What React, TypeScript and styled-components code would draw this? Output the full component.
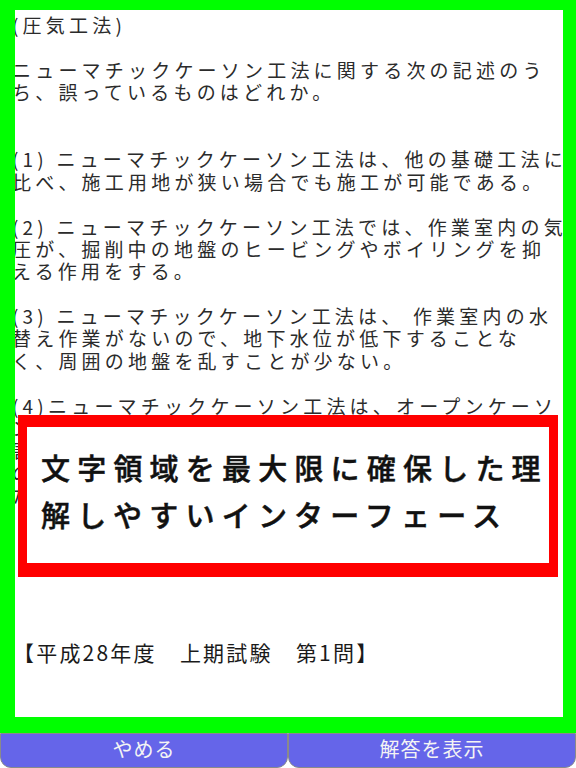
import React from 'react';
import styled, { createGlobalStyle } from 'styled-components';

const GlobalStyle = createGlobalStyle`
  html, body {
    margin: 0;
    padding: 0;
    background: #ffffff;
  }
  body {
    font-family: "Noto Sans CJK JP", "Noto Sans", sans-serif;
  }
  * {
    box-sizing: border-box;
  }
`;

const Screen = styled.div`
  width: 576px;
  height: 768px;
  display: flex;
  flex-direction: column;
  overflow: hidden;
`;

const Frame = styled.div`
  height: 735px;
  background: #00ff00;
  padding: 10px 13px 16px 15px;
  display: flex;
`;

const Panel = styled.div`
  position: relative;
  flex: 1;
  background: #ffffff;
  overflow: hidden;
`;

const Question = styled.div`
  margin-left: -3px;
  padding-top: 4px;
  color: #2b2b2b;
  font-size: 19px;
  letter-spacing: 4.2px;
`;

const Line = styled.div<{ $label?: boolean }>`
  height: 22.4px;
  line-height: 22.4px;
  white-space: pre;
  ${(p) => p.$label && `
    font-size: 21px;
    letter-spacing: 2.2px;
    color: #1a1a1a;
    padding-left: 1px;
  `}
`;

const Notice = styled.div`
  position: absolute;
  left: 3px;
  top: 405px;
  width: 540px;
  height: 162px;
  background: #ffffff;
  border: solid #ff0000;
  border-width: 12px 9px 14px 9px;
  padding: 17px 0 0 14px;
`;

const NoticeText = styled.div`
  color: #111111;
  font-size: 29px;
  font-weight: 500;
  -webkit-text-stroke: 0.5px #111111;
  letter-spacing: 7.2px;
  line-height: 47px;
  white-space: pre;
`;

const ButtonBar = styled.div`
  flex: 1;
  display: grid;
  grid-template-columns: 1fr 1fr;
`;

const ActionButton = styled.button`
  margin: 0;
  padding: 0 0 4px;
  border: 1.5px solid #8a8a8a;
  border-top-width: 1px;
  border-radius: 0 0 11px 11px;
  background: #6565e9;
  color: #f4f4f4;
  font-family: "Noto Sans CJK JP", "Noto Sans", sans-serif;
  font-size: 20px;
  letter-spacing: 1px;
  cursor: pointer;
`;

const lines: string[] = [
  '(圧気工法)',
  '',
  'ニューマチックケーソン工法に関する次の記述のう',
  'ち、誤っているものはどれか。',
  '',
  '',
  '(1) ニューマチックケーソン工法は、他の基礎工法に',
  '比べ、施工用地が狭い場合でも施工が可能である。',
  '',
  '(2) ニューマチックケーソン工法では、作業室内の気',
  '圧が、掘削中の地盤のヒービングやボイリングを抑',
  'える作用をする。',
  '',
  '(3) ニューマチックケーソン工法は、 作業室内の水',
  '替え作業がないので、地下水位が低下することな',
  'く、周囲の地盤を乱すことが少ない。',
  '',
  '(4)ニューマチックケーソン工法は、オープンケーソ',
  'ン工法に比べ、作業室内で直接掘削できるので、障',
  '害物の除去が容易で、支持地盤を直接確認できる',
  'ので、信頼性の高い基礎を築造できる。また、沈下',
  'ため、沈下の施工精度が高く、傾きの修正が容易。',
  '',
  '',
  '',
  '',
  '',
  '',
];

const label = '【平成28年度　上期試験　第1問】';

export default function App() {
  return (
    <Screen>
      <GlobalStyle />
      <Frame>
        <Panel>
          <Question>
            {lines.map((text, i) => (
              // eslint-disable-next-line react/no-array-index-key
              <Line key={i}>{text}</Line>
            ))}
            <Line $label>{label}</Line>
          </Question>
          <Notice>
            <NoticeText>
              文字領域を最大限に確保した理
              {'\n'}
              解しやすいインターフェース
            </NoticeText>
          </Notice>
        </Panel>
      </Frame>
      <ButtonBar>
        <ActionButton type="button">やめる</ActionButton>
        <ActionButton type="button">解答を表示</ActionButton>
      </ButtonBar>
    </Screen>
  );
}
